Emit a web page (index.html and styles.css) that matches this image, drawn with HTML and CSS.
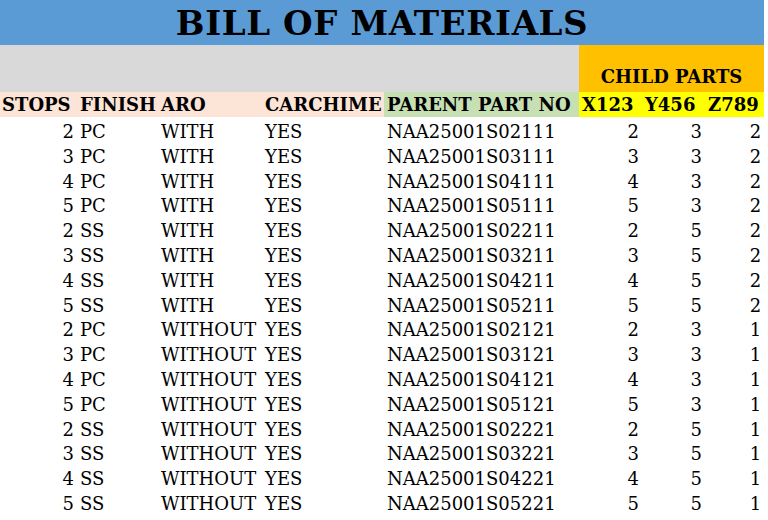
FILE: index.html
```html
<!DOCTYPE html>
<html>
<head>
<meta charset="utf-8">
<link rel="stylesheet" href="styles.css">
</head>
<body>
<table class="bom">
  <colgroup>
    <col class="c-stops"><col class="c-finish"><col class="c-aro"><col class="c-car"><col class="c-parent"><col class="c-x"><col class="c-y"><col class="c-z">
  </colgroup>
  <thead>
    <tr class="title-row"><th colspan="8" class="title">BILL OF MATERIALS</th></tr>
    <tr class="band-row"><th colspan="5" class="band"></th><th colspan="3" class="child">CHILD PARTS</th></tr>
    <tr class="head-row">
      <th class="peach">STOPS</th><th class="peach">FINISH</th><th class="peach">ARO</th><th class="peach">CARCHIME</th>
      <th class="green">PARENT PART NO</th>
      <th class="yellow">X123</th><th class="yellow">Y456</th><th class="yellow">Z789</th>
    </tr>
  </thead>
  <tbody>
    <tr><td class="num">2</td><td>PC</td><td>WITH</td><td>YES</td><td>NAA25001S02111</td><td class="num">2</td><td class="num">3</td><td class="num">2</td></tr>
    <tr><td class="num">3</td><td>PC</td><td>WITH</td><td>YES</td><td>NAA25001S03111</td><td class="num">3</td><td class="num">3</td><td class="num">2</td></tr>
    <tr><td class="num">4</td><td>PC</td><td>WITH</td><td>YES</td><td>NAA25001S04111</td><td class="num">4</td><td class="num">3</td><td class="num">2</td></tr>
    <tr><td class="num">5</td><td>PC</td><td>WITH</td><td>YES</td><td>NAA25001S05111</td><td class="num">5</td><td class="num">3</td><td class="num">2</td></tr>
    <tr><td class="num">2</td><td>SS</td><td>WITH</td><td>YES</td><td>NAA25001S02211</td><td class="num">2</td><td class="num">5</td><td class="num">2</td></tr>
    <tr><td class="num">3</td><td>SS</td><td>WITH</td><td>YES</td><td>NAA25001S03211</td><td class="num">3</td><td class="num">5</td><td class="num">2</td></tr>
    <tr><td class="num">4</td><td>SS</td><td>WITH</td><td>YES</td><td>NAA25001S04211</td><td class="num">4</td><td class="num">5</td><td class="num">2</td></tr>
    <tr><td class="num">5</td><td>SS</td><td>WITH</td><td>YES</td><td>NAA25001S05211</td><td class="num">5</td><td class="num">5</td><td class="num">2</td></tr>
    <tr><td class="num">2</td><td>PC</td><td>WITHOUT</td><td>YES</td><td>NAA25001S02121</td><td class="num">2</td><td class="num">3</td><td class="num">1</td></tr>
    <tr><td class="num">3</td><td>PC</td><td>WITHOUT</td><td>YES</td><td>NAA25001S03121</td><td class="num">3</td><td class="num">3</td><td class="num">1</td></tr>
    <tr><td class="num">4</td><td>PC</td><td>WITHOUT</td><td>YES</td><td>NAA25001S04121</td><td class="num">4</td><td class="num">3</td><td class="num">1</td></tr>
    <tr><td class="num">5</td><td>PC</td><td>WITHOUT</td><td>YES</td><td>NAA25001S05121</td><td class="num">5</td><td class="num">3</td><td class="num">1</td></tr>
    <tr><td class="num">2</td><td>SS</td><td>WITHOUT</td><td>YES</td><td>NAA25001S02221</td><td class="num">2</td><td class="num">5</td><td class="num">1</td></tr>
    <tr><td class="num">3</td><td>SS</td><td>WITHOUT</td><td>YES</td><td>NAA25001S03221</td><td class="num">3</td><td class="num">5</td><td class="num">1</td></tr>
    <tr><td class="num">4</td><td>SS</td><td>WITHOUT</td><td>YES</td><td>NAA25001S04221</td><td class="num">4</td><td class="num">5</td><td class="num">1</td></tr>
    <tr><td class="num">5</td><td>SS</td><td>WITHOUT</td><td>YES</td><td>NAA25001S05221</td><td class="num">5</td><td class="num">5</td><td class="num">1</td></tr>
  </tbody>
</table>
</body>
</html>
```

FILE: styles.css
```css
html, body {
  margin: 0;
  padding: 0;
  background: #ffffff;
}

.bom {
  border-collapse: collapse;
  table-layout: fixed;
  width: 764px;
  font-family: "DejaVu Serif", "Liberation Serif", serif;
  font-size: 18px;
  color: #000;
}

.c-stops { width: 77px; }
.c-finish { width: 81px; }
.c-aro { width: 104px; }
.c-car { width: 122px; }
.c-parent { width: 195px; }
.c-x { width: 63px; }
.c-y { width: 63px; }
.c-z { width: 59px; }

.bom th, .bom td {
  padding: 0 3px;
  white-space: nowrap;
  overflow: visible;
  text-align: left;
}

.bom td {
  padding-top: 5px;
  line-height: 19.8px;
  vertical-align: top;
}

.bom .num { text-align: right; }

.title-row .title {
  background: #5b9bd5;
  height: 45px;
  text-align: center;
  font-size: 34px;
  font-weight: bold;
  letter-spacing: 0.6px;
  line-height: 40px;
  vertical-align: middle;
}

.band-row th { height: 47px; }

.band { background: #d9d9d9; }

.child {
  background: #ffc000;
  text-align: center !important;
  vertical-align: bottom;
  font-weight: bold;
  font-size: 18px;
  line-height: 30px;
}

.head-row th {
  height: 25px;
  font-weight: bold;
  font-size: 18px;
  line-height: 20px;
  vertical-align: middle;
}

.head-row th:first-child { padding-left: 2px; }

.peach { background: #fce4d6; }
.green { background: #c6e0b4; }
.yellow { background: #ffff00; }
```
